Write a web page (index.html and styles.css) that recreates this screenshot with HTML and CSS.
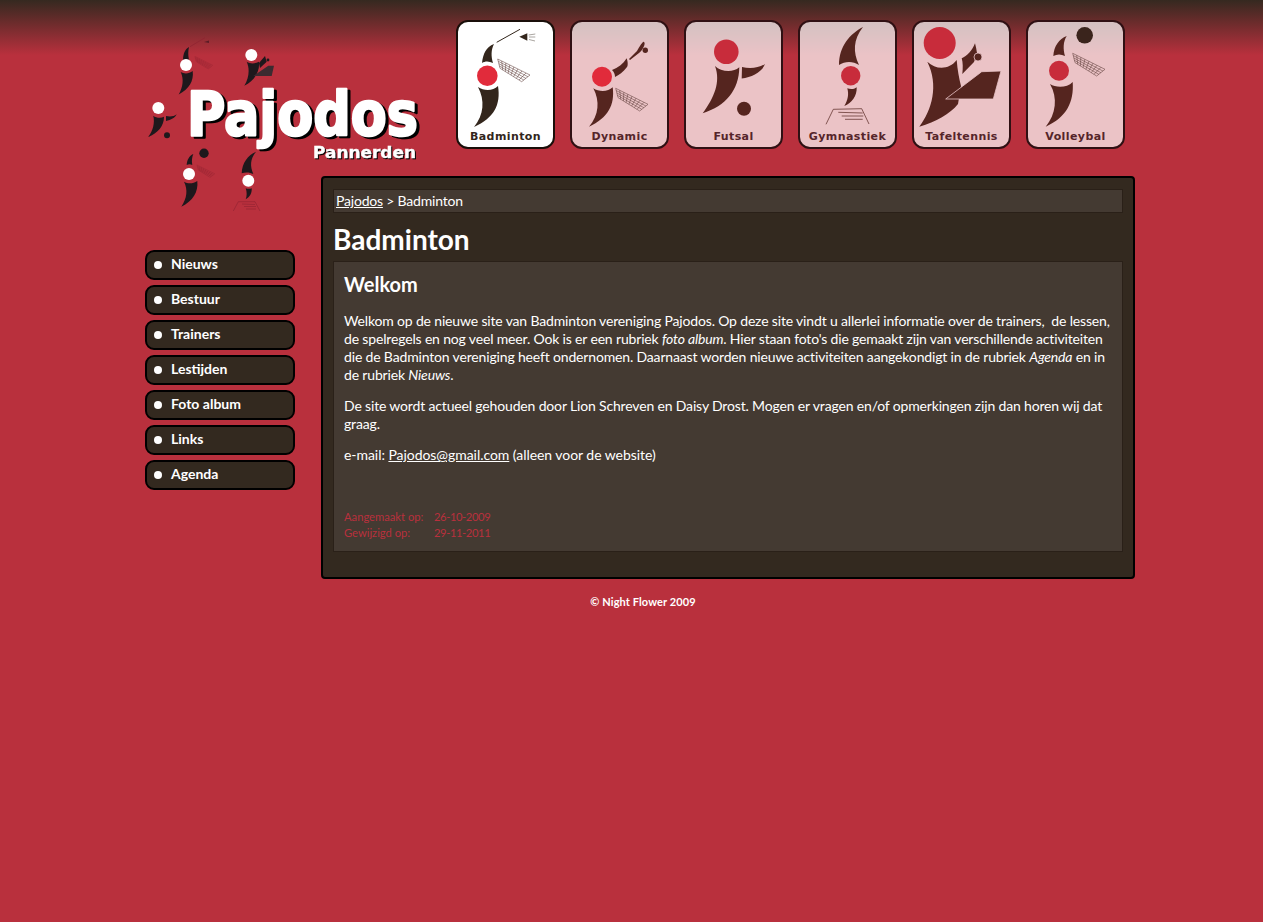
FILE: index.html
```html
<!DOCTYPE html>
<html lang="nl">
<head>
    <meta charset="UTF-8">
    <title>Pajodos - Badminton</title>
    <link rel="stylesheet" href="styles.css">
</head>
<body>
    <!-- shared net shape, drawn at the badminton position -->
    <svg class="defs" width="0" height="0">
        <defs>
            <g id="net" fill="none" stroke-width=".55">
                <path d="M41.7 39 74 55M42.3 41.3 71.9 56.7M42.9 43.7 69.9 58.4M43.4 46 67.8 60M44 48.3 65.7 61.7"/>
                <path d="M41.7 39 44 48.3M45.7 41 46.7 50M49.8 43 49.4 51.7M53.8 45 52.1 53.3M57.9 47 54.9 55M61.9 49 57.6 56.7M65.9 51 60.3 58.4M70 53 63 60M74 55 65.7 61.7"/>
            </g>
        </defs>
    </svg>

    <div class="wrapper">
        <div class="side">
            <svg class="logo" width="280" height="180" viewBox="0 0 280 180">
                <!-- badminton -->
                <g class="ink">
                    <path d="M44 12C40 14 38 19 38 25 40 24 42 24 44 25 43 20 43 16 44 12Z"/>
                    <path d="M35.7 37C39 39 44 39 47.7 36 49 46 44 54 33.7 59.5 38 52 39 44 35.7 37Z"/>
                </g>
                <circle class="dot" cx="41" cy="30" r="6"/>
                <path class="dim" d="M45 11.7 60 2.7" fill="none" stroke-width=".7"/>
                <path class="dimfill" d="M59 7 64 5.5 64 8Z"/>
                <use class="dim" href="#net" transform="translate(27 0) scale(.55)"/>
                <!-- tafeltennis -->
                <g class="ink">
                    <path d="M101.7 26.7C105 29 110 29 114 26.7 115 37 109 46 99.3 50.7 104 43 105 34 101.7 26.7Z"/>
                    <path d="M114 28 120 21 121.7 26.7 115 33Z"/>
                    <circle cx="123" cy="25" r="1.4"/>
                </g>
                <circle class="dot" cx="106.3" cy="20" r="6"/>
                <path class="slab" d="M108.3 41 123.3 30.7 129 30.7 126.7 41Z"/>
                <!-- futsal -->
                <g class="ink">
                    <path d="M8.3 80.7C11 83 16 83.5 19 81.7 19 91 13 98 3 102 8 96 10 88 8.3 80.7Z"/>
                    <path d="M21 81C25 82 29 81.5 31.7 79.3 30 83 26 85 21 86Z"/>
                    <circle cx="22" cy="100.3" r="3"/>
                </g>
                <circle class="dot" cx="13.3" cy="73" r="6"/>
                <!-- volleybal -->
                <g class="ink">
                    <circle cx="59" cy="118.3" r="4.7"/>
                    <path d="M48.3 119C44 121 42 125 41.7 130 43.5 129 45.5 129 47.3 130 46.5 126 47 122 48.3 119Z"/>
                    <path d="M39 146.7C43 149 48 149 52.3 146 53.5 157 48 166 36.3 171.7 42 163 43 155 39 146.7Z"/>
                </g>
                <circle class="dot" cx="44" cy="139" r="6"/>
                <use class="dim" href="#net" transform="translate(29 108.5) scale(.55)"/>
                <!-- gymnastiek -->
                <g class="ink">
                    <path d="M111 116.7C103 120 97 128 96.7 138.3 100 137 105 137 108.3 139 105 131 105 124 111 116.7Z"/>
                    <path d="M100.7 153.3C102.5 154 105 154 106.7 153.3 107 158 105 162 100.7 164.3 102 161 102 157 100.7 153.3Z"/>
                </g>
                <circle class="dot" cx="103.3" cy="145.7" r="6"/>
                <path class="dim" d="M88.3 176 93.3 166.7 110 166.7 115 176M97 169 110 169.5M99 171.5 111 171.5M101 174 111 174" fill="none" stroke-width=".6"/>
                <!-- name -->
                <text class="logo-name" x="42" y="100" textLength="231" lengthAdjust="spacingAndGlyphs">Pajodos</text>
                <text class="logo-place" x="168" y="123" textLength="103" lengthAdjust="spacingAndGlyphs">Pannerden</text>
            </svg>

            <ul class="menu">
                <li><a href="#">Nieuws</a></li>
                <li><a href="#">Bestuur</a></li>
                <li><a href="#">Trainers</a></li>
                <li><a href="#">Lestijden</a></li>
                <li><a href="#">Foto album</a></li>
                <li><a href="#">Links</a></li>
                <li><a href="#">Agenda</a></li>
            </ul>
        </div>

        <div class="main">
            <div class="tabs">
                <a class="tab active" href="#">
                    <svg viewBox="0 0 99 108">
                        <path class="fig" d="M38 24C30 27 27 34 26 43 29 41 33 41 37 43 35 36 35 30 38 24Z"/>
                        <path class="fig" d="M22 67C28 71 37 71 42 66 45 85 38 98 18 107 28 95 29 80 22 67Z"/>
                        <circle cx="31.3" cy="55.7" r="10.3" fill="#e12b3b"/>
                        <path class="fig-line" d="M40.7 22.3 64 9.3" stroke-width="1"/>
                        <path class="fig" d="M63.3 16.7 71.3 13.3 71.3 20.7Z"/>
                        <path class="fig-line thin" d="M72.7 15 79.3 14M73 17 79.3 17M73 19.5 79 21"/>
                        <use class="net" href="#net"/>
                    </svg>
                    <span>Badminton</span>
                </a>
                <a class="tab" href="#">
                    <svg viewBox="0 0 99 108">
                        <path class="fig" d="M23.3 68.3C29 72 38 72 42.7 67.3 45 85 38 98 19 106.7 29 95 30 81 23.3 68.3Z"/>
                        <path class="fig" d="M42 50C48 48 53 44 56.7 38.3 58 42 58 46 57 47 53 52 49 55 45 57 45 54 44 52 42 50Z"/>
                        <path class="fig" d="M59 39 67 31C70 26 73 21 74 22 76 23 73 30 69 33L60 40Z"/>
                        <circle class="fig" cx="75.3" cy="30.3" r="2.7"/>
                        <circle cx="32" cy="56.7" r="10" fill="#e12b3b"/>
                        <use class="net" href="#net" transform="translate(4 29.3)"/>
                    </svg>
                    <span>Dynamic</span>
                </a>
                <a class="tab" href="#">
                    <svg viewBox="0 0 99 108">
                        <circle cx="42.3" cy="31.7" r="12.3" fill="#c82c3b"/>
                        <path class="fig" d="M31 46C37 52 49 53 55.3 47.3 55 70 42 86 18.7 93.3 30 78 37 62 31 46Z"/>
                        <path class="fig" d="M58 47C66 49 75 48 81 44 78 52 68 57 57.7 58.5Z"/>
                        <circle class="fig" cx="60" cy="88.7" r="7"/>
                    </svg>
                    <span>Futsal</span>
                </a>
                <a class="tab" href="#">
                    <svg viewBox="0 0 99 108">
                        <path class="fig" d="M65 7C52 14 41 26 41 45 47 41 55 41 61 45 55 32 55 20 65 7Z"/>
                        <circle cx="52.7" cy="55.7" r="9.7" fill="#c82c3b"/>
                        <path class="fig" d="M49.3 68.3C52 69.5 56 69.5 58.7 67.3 59 76 54 83 46.3 86 50 80 51 74 49.3 68.3Z"/>
                        <path class="fig-line" d="M28 104.3 35.3 89.3 63.7 88.7 71 104M40.3 92.3 64.7 93M43.7 96 65.3 96M47 99.3 64.7 99.3" stroke-width=".7"/>
                    </svg>
                    <span>Gymnastiek</span>
                </a>
                <a class="tab" href="#">
                    <svg viewBox="0 0 99 108">
                        <circle cx="27.7" cy="23" r="16" fill="#c82c3b"/>
                        <path class="fig" d="M15.3 41.7C24 50 37 50 44.7 40 45.5 50 47 58 49 66L46 84C38 94 24 102 7.3 106.7 20 90 27 65 15.3 41.7Z"/>
                        <path class="fig" d="M49.7 38.3C55 36 60 31 63 23.3 64 27 64.5 30 65 33L62 42 50.3 54C51 48 51 43 49.7 38.3Z"/>
                        <circle class="fig rim" cx="66" cy="37" r="4"/>
                        <path class="fig rim" d="M69.7 51.7 89 51 81.3 79 33.7 79Z"/>
                    </svg>
                    <span>Tafeltennis</span>
                </a>
                <a class="tab" href="#">
                    <svg viewBox="0 0 99 108">
                        <circle cx="58.7" cy="15.3" r="8.3" fill="#3a241c"/>
                        <path class="fig" d="M40.7 16C33 19 28 26 27.3 36 31 34 35 34 39 36 37 29 37 22 40.7 16Z"/>
                        <circle cx="33" cy="50.7" r="10" fill="#c82c3b"/>
                        <path class="fig" d="M24 64C30 68 41 68 46.7 62 48 82 41 97 19.7 106.7 30 94 32 78 24 64Z"/>
                        <use class="net" href="#net" transform="translate(5 -5.7)"/>
                    </svg>
                    <span>Volleybal</span>
                </a>
            </div>

            <div class="panel">
                <div class="crumb"><a href="#">Pajodos</a> &gt; Badminton</div>
                <h1>Badminton</h1>
                <div class="box">
                    <h2>Welkom</h2>
                    <p>Welkom op de nieuwe site van Badminton vereniging Pajodos. Op deze site vindt u allerlei informatie over de trainers,&nbsp; de lessen, de spelregels en nog veel meer. Ook is er een rubriek <em>foto album</em>. Hier staan foto's die gemaakt zijn van verschillende activiteiten die de Badminton vereniging heeft ondernomen. Daarnaast worden nieuwe activiteiten aangekondigt in de rubriek <em>Agenda</em> en in de rubriek <em>Nieuws</em>.</p>
                    <p>De site wordt actueel gehouden door Lion Schreven en Daisy Drost. Mogen er vragen en/of opmerkingen zijn dan horen wij dat graag.</p>
                    <p class="mail">e-mail: <a href="#">Pajodos@gmail.com</a> (alleen voor de website)</p>
                    <dl class="dates">
                        <dt>Aangemaakt op:</dt><dd>26-10-2009</dd>
                        <dt>Gewijzigd op:</dt><dd>29-11-2011</dd>
                    </dl>
                </div>
            </div>
            <div class="copy">&copy; Night Flower 2009</div>
        </div>
    </div>
</body>
</html>
```

FILE: styles.css
```css
html, body {
    height: 100%;
}
body {
    margin: 0;
    font-family: Lato, "Noto Sans", sans-serif;
    font-size: 14px;
    color: #fff;
    background: #b9303d linear-gradient(#352920 0, #b9303d 55px) no-repeat;
    background-size: 100% 55px;
}
a {
    color: #fff;
}
.defs {
    display: block;
    height: 0;
}
.wrapper {
    display: grid;
    grid-template-columns: 150px 814px;
    column-gap: 26px;
    width: 990px;
    margin-left: 145px;
}

/* logo + menu */
.side {
    padding-top: 35px;
}
.logo {
    display: block;
    overflow: visible;
}
.ink {
    fill: #1e181c;
}
.dot {
    fill: #fff;
}
.dim {
    stroke: #8e2230;
}
.dimfill {
    fill: #5c1c26;
}
.slab {
    fill: #3b2b30;
}
.logo-name {
    font-family: "DejaVu Sans", sans-serif;
    font-weight: bold;
    font-size: 60px;
    fill: #fff;
    stroke: #fff;
    stroke-width: 2.5;
    stroke-linejoin: round;
    filter: drop-shadow(3px 2px 0 #000);
}
.logo-place {
    font-family: "DejaVu Sans", sans-serif;
    font-weight: bold;
    font-size: 15px;
    fill: #fff;
    stroke: #fff;
    stroke-width: .4;
    filter: drop-shadow(1px 1px 0 #000);
}
.menu {
    list-style: none;
    margin: 35px 0 0;
    padding: 0;
    display: flex;
    flex-direction: column;
    gap: 5px;
}
.menu a {
    display: flex;
    align-items: center;
    gap: 9px;
    box-sizing: border-box;
    height: 30px;
    padding: 0 0 4px 7px;
    background: #33291f;
    border: 2px solid #000;
    border-radius: 9px;
    font-weight: bold;
    text-decoration: none;
}
.menu a::before {
    content: "";
    width: 8px;
    height: 8px;
    margin-top: 4px;
    border-radius: 50%;
    background: #fff;
}

/* sport tabs */
.tabs {
    display: flex;
    justify-content: flex-end;
    gap: 15px;
    padding: 20px 10px 0 0;
}
.tab {
    display: block;
    box-sizing: border-box;
    width: 99px;
    height: 129px;
    border: 2px solid #2f1013;
    border-radius: 12px;
    background: rgba(255, 255, 255, .71);
    color: #55252a;
    text-align: center;
    text-decoration: none;
    font-family: "DejaVu Sans", sans-serif;
    font-size: 11px;
    font-weight: bold;
    letter-spacing: .4px;
}
.tab svg {
    display: block;
    width: 99px;
    height: 108px;
    margin: -2px -2px 0;
}
.tab span {
    display: block;
    padding-top: 1px;
    line-height: 16px;
}
.tab.active {
    background: #fff;
    border-color: #1a0f0a;
    color: #33261c;
}
.fig {
    fill: #55251f;
}
.active .fig {
    fill: #33261c;
}
.fig-line {
    fill: none;
    stroke: #55251f;
}
.active .fig-line {
    stroke: #33261c;
}
.fig-line.thin {
    stroke-width: .6;
    opacity: .7;
}
.net {
    stroke: #5f3f3b;
}
.rim {
    stroke: #e9c4c8;
    stroke-width: .8;
}

/* content */
.panel {
    box-sizing: border-box;
    height: 403px;
    margin-top: 27px;
    padding: 11px 10px 0;
    background: #33291f;
    border: 2px solid #000;
    border-radius: 4px;
}
.crumb {
    box-sizing: border-box;
    height: 24px;
    padding-left: 2px;
    line-height: 22px;
    background: #443a32;
    border: 1px solid #2a2018;
    font-size: 14px;
    letter-spacing: -.2px;
}
h1 {
    margin: 10px 0 6px;
    font-size: 28px;
    line-height: 32px;
}
.box {
    box-sizing: border-box;
    height: 291px;
    padding: 0 10px;
    background: #443a32;
    border: 1px solid #2a2018;
}
h2 {
    margin: 10px 0 16px;
    font-size: 20px;
    line-height: 24px;
}
.box p {
    margin: 0 0 13px;
    line-height: 18px;
    letter-spacing: -.16px;
}
.box p.mail {
    letter-spacing: -.05px;
}
.dates {
    display: grid;
    grid-template-columns: 90px 1fr;
    margin: 45px 0 0;
    color: #b9303d;
    font-size: 11.2px;
    line-height: 16px;
}
.dates dd {
    margin: 0;
    letter-spacing: -.4px;
}
.copy {
    margin: 16px 0 0 -176px;
    padding-left: 6px;
    text-align: center;
    font-size: 11px;
    font-weight: bold;
    letter-spacing: .1px;
}
```
